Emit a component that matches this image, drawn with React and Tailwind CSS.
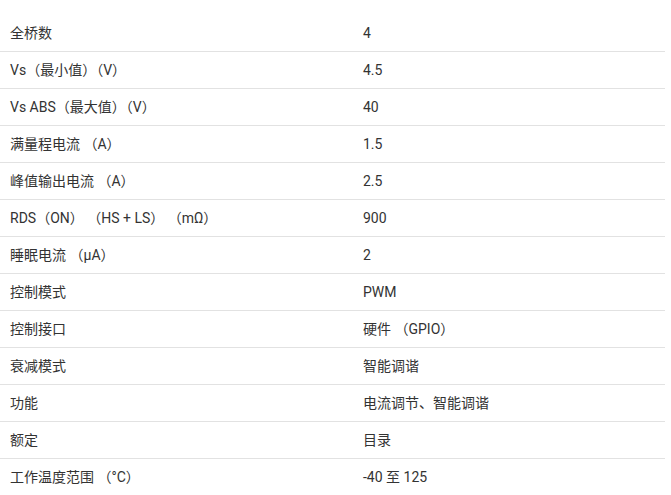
const rows = [
  ["全桥数", "4"],
  ["Vs（最小值）（V）", "4.5"],
  ["Vs ABS（最大值）（V）", "40"],
  ["满量程电流 （A）", "1.5"],
  ["峰值输出电流 （A）", "2.5"],
  ["RDS（ON） （HS + LS） （mΩ）", "900"],
  ["睡眠电流 （µA）", "2"],
  ["控制模式", "PWM"],
  ["控制接口", "硬件 （GPIO）"],
  ["衰减模式", "智能调谐"],
  ["功能", "电流调节、智能调谐"],
  ["额定", "目录"],
  ["工作温度范围 （°C）", "-40 至 125"],
];

export default function App() {
  return (
    <div
      className="w-[671px] h-[495px] overflow-hidden bg-white pt-[15px] text-[14px] text-[#333333]"
      style={{ fontFamily: 'Roboto, "Noto Sans CJK SC", sans-serif' }}
    >
      <div className="w-[665px]">
        {rows.map(([label, value], i) => (
          <div
            key={label}
            className={`grid grid-cols-[353px_1fr] h-[37px] items-center ${
              i < rows.length - 1 ? "border-b border-[#e2e2e2]" : ""
            }`}
          >
            <div className="pl-[10px] whitespace-pre">{label}</div>
            <div className="pl-[10px] whitespace-pre">{value}</div>
          </div>
        ))}
      </div>
    </div>
  );
}
